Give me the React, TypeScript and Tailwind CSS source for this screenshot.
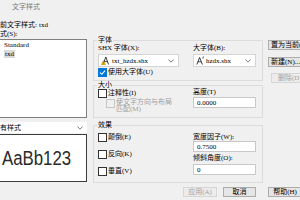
import type { ReactNode } from 'react';

const uiFont = "font-['Liberation_Serif','Noto_Sans_CJK_SC',serif]";

function Check({ checked = false, disabled = false }: { checked?: boolean; disabled?: boolean }) {
  return (
    <span
      className={`flex h-[9px] w-[9px] shrink-0 items-center justify-center border ${
        checked
          ? 'border-[#0078d7] bg-[#0078d7]'
          : disabled
            ? 'border-[#c6c6c6] bg-[#f0f0f0]'
            : 'border-[#333333] bg-white'
      }`}
    >
      {checked && (
        <svg width="7" height="7" viewBox="0 0 7 7">
          <polyline points="1,3.6 2.8,5.3 6,1.6" fill="none" stroke="#fff" strokeWidth="1.1" />
        </svg>
      )}
    </span>
  );
}

function Chevron() {
  return (
    <svg width="6" height="4" viewBox="0 0 6 4" className="shrink-0">
      <polyline points="0.5,0.6 3,3.2 5.5,0.6" fill="none" stroke="#555" strokeWidth="0.8" />
    </svg>
  );
}

// shx font icon with the yellow warning triangle
function ShxIcon() {
  return (
    <svg width="8" height="9" viewBox="0 0 8 9" className="shrink-0">
      <polyline points="2,8.5 4.8,1 7.6,8.5" fill="none" stroke="#222" strokeWidth="0.9" />
      <line x1="3.3" y1="5.6" x2="6.3" y2="5.6" stroke="#222" strokeWidth="0.8" />
      <polygon points="0.2,8.8 2.4,4.6 4.6,8.8" fill="#f2c200" stroke="#8a6a00" strokeWidth="0.4" />
      <line x1="2.4" y1="6" x2="2.4" y2="7.6" stroke="#333" strokeWidth="0.5" />
    </svg>
  );
}

function BigFontIcon() {
  return (
    <svg width="8" height="9" viewBox="0 0 8 9" className="shrink-0">
      <polyline points="0.8,8.5 3.6,1.5 6.4,8.5" fill="none" stroke="#222" strokeWidth="0.9" />
      <line x1="2" y1="5.8" x2="5.2" y2="5.8" stroke="#222" strokeWidth="0.8" />
      <line x1="7.4" y1="0.5" x2="6.9" y2="2.6" stroke="#222" strokeWidth="0.8" />
    </svg>
  );
}

function Group({ title, className = '', children }: { title: string; className?: string; children: ReactNode }) {
  return (
    <div className={`border border-[#dcdcdc] px-[4px] ${className}`}>
      <div className="-mt-[5px] -ml-[1px] h-[8px] w-fit bg-[#f0f0f0] px-[1px]">{title}</div>
      {children}
    </div>
  );
}

function Btn({ children, disabled = false, className = '' }: { children: ReactNode; disabled?: boolean; className?: string }) {
  return (
    <button
      type="button"
      className={`flex shrink-0 items-center border ${
        disabled ? 'border-[#d6d6d6] bg-[#ececec] text-[#a2a2a2]' : 'border-[#adadad] bg-[#e5e5e5] text-black'
      } ${className}`}
    >
      {children}
    </button>
  );
}

function Field({ value }: { value: string }) {
  return <div className="flex h-[11px] items-center border border-[#c8c8c8] bg-white pl-[3px]">{value}</div>;
}

export default function App() {
  return (
    <div className={`h-[200px] w-[300px] overflow-hidden bg-[#f0f0f0] text-[7px] leading-[8px] text-black ${uiFont}`}>
      {/* title bar */}
      <div className="flex h-[14px] items-center pl-[12px] text-[#7a7a7a]">文字样式</div>

      <div className="flex pt-[6px]">
        {/* styles list + preview */}
        <div className="-ml-[10px] flex w-[97px] shrink-0 flex-col">
          <div className="flex h-[9px] items-center pl-[3px]">
            当前文字样式:<span className="ml-[2px]">txd</span>
          </div>
          <div className="flex h-[9px] items-center pl-[3px]">样式(S):</div>
          <div className="mt-[1px] h-[79px] border border-[#7f7f7f] bg-white pl-[13px] pt-[1px] leading-[9px]">
            <div>Standard</div>
            <div>
              <span className="bg-[#dadada] px-px">txd</span>
            </div>
          </div>
          <div className="mt-[4px] flex h-[11px] items-center justify-between bg-white pl-[3px] pr-[4px]">
            所有样式
            <Chevron />
          </div>
          <div className="mt-[1px] flex h-[48px] items-center border border-[#3c3c3c] bg-white pl-[11px]">
            <span className="origin-left scale-x-[0.84] font-['Liberation_Sans',sans-serif] text-[20px] leading-none text-[#2a2a2a]">
              AaBb123
            </span>
          </div>
        </div>

        {/* settings */}
        <div className="ml-[6px] flex w-[170px] shrink-0 flex-col pt-[20px]">
          <Group title="字体" className="h-[41px]">
            <div className="flex">
              <div className="w-[81px]">
                <div className="h-[8px]">SHX 字体(X):</div>
                <div className="mt-[2px] flex h-[13px] items-center border border-[#d4d4d4] bg-white pl-[2px] pr-[4px]">
                  <ShxIcon />
                  <span className="ml-[3px] flex-1">txt_hzdx.shx</span>
                  <Chevron />
                </div>
                <div className="mt-[1px] flex h-[8px] items-center gap-[1px]">
                  <Check checked />
                  使用大字体(U)
                </div>
              </div>
              <div className="ml-[14px] w-[63px]">
                <div className="h-[8px]">大字体(B):</div>
                <div className="mt-[2px] flex h-[13px] items-center border border-[#d4d4d4] bg-white pl-[2px] pr-[4px]">
                  <BigFontIcon />
                  <span className="ml-[2px] flex-1">hzdx.shx</span>
                  <Chevron />
                </div>
              </div>
            </div>
          </Group>

          <Group title="大小" className="mt-[4px] h-[33px]">
            <div className="flex">
              <div className="w-[81px]">
                <div className="flex h-[8px] items-center gap-[1px]">
                  <Check />
                  注释性(I)
                </div>
                <div className="mt-[2px] flex gap-[1px] pl-[8px] leading-[7px] text-[#a0a0a0]">
                  <Check disabled />
                  <span>
                    使文字方向与布局
                    <br />
                    匹配(M)
                  </span>
                </div>
              </div>
              <div className="-mt-[1px] ml-[14px] w-[63px]">
                <div className="h-[8px]">高度(T)</div>
                <div className="mt-[1px]">
                  <Field value="0.0000" />
                </div>
              </div>
            </div>
          </Group>

          <Group title="效果" className="mt-[7px] h-[58px]">
            <div className="flex">
              <div className="w-[81px] pt-[4px]">
                <div className="flex h-[8px] items-center gap-[1px]">
                  <Check />
                  颠倒(E)
                </div>
                <div className="mt-[9px] flex h-[8px] items-center gap-[1px]">
                  <Check />
                  反向(K)
                </div>
                <div className="mt-[9px] flex h-[8px] items-center gap-[1px]">
                  <Check />
                  垂直(V)
                </div>
              </div>
              <div className="ml-[14px] w-[63px] pt-[4px]">
                <div className="h-[8px]">宽度因子(W):</div>
                <Field value="0.7500" />
                <div className="mt-[2px] h-[8px]">倾斜角度(O):</div>
                <div className="mt-[2px]">
                  <Field value="0" />
                </div>
              </div>
            </div>
          </Group>
        </div>

        {/* side buttons */}
        <div className="ml-[5px] flex w-[45px] shrink-0 flex-col pt-[20px]">
          <Btn className="h-[10px] pl-[2px]">置为当前(C)</Btn>
          <Btn className="mt-[7px] h-[10px] pl-[2px]">新建(N)...</Btn>
          <Btn disabled className="mt-[6px] ml-[3px] h-[10px] pl-[6px]">
            删除(D)
          </Btn>
        </div>
      </div>

      {/* bottom buttons */}
      <div className="mt-[4px] flex pl-[183px]">
        <Btn disabled className="h-[10px] w-[34px] justify-center">
          应用(A)
        </Btn>
        <Btn className="ml-[6px] h-[10px] w-[33px] justify-center">取消</Btn>
        <Btn className="ml-[12px] h-[10px] w-[34px] justify-center">帮助(H)</Btn>
      </div>
    </div>
  );
}
